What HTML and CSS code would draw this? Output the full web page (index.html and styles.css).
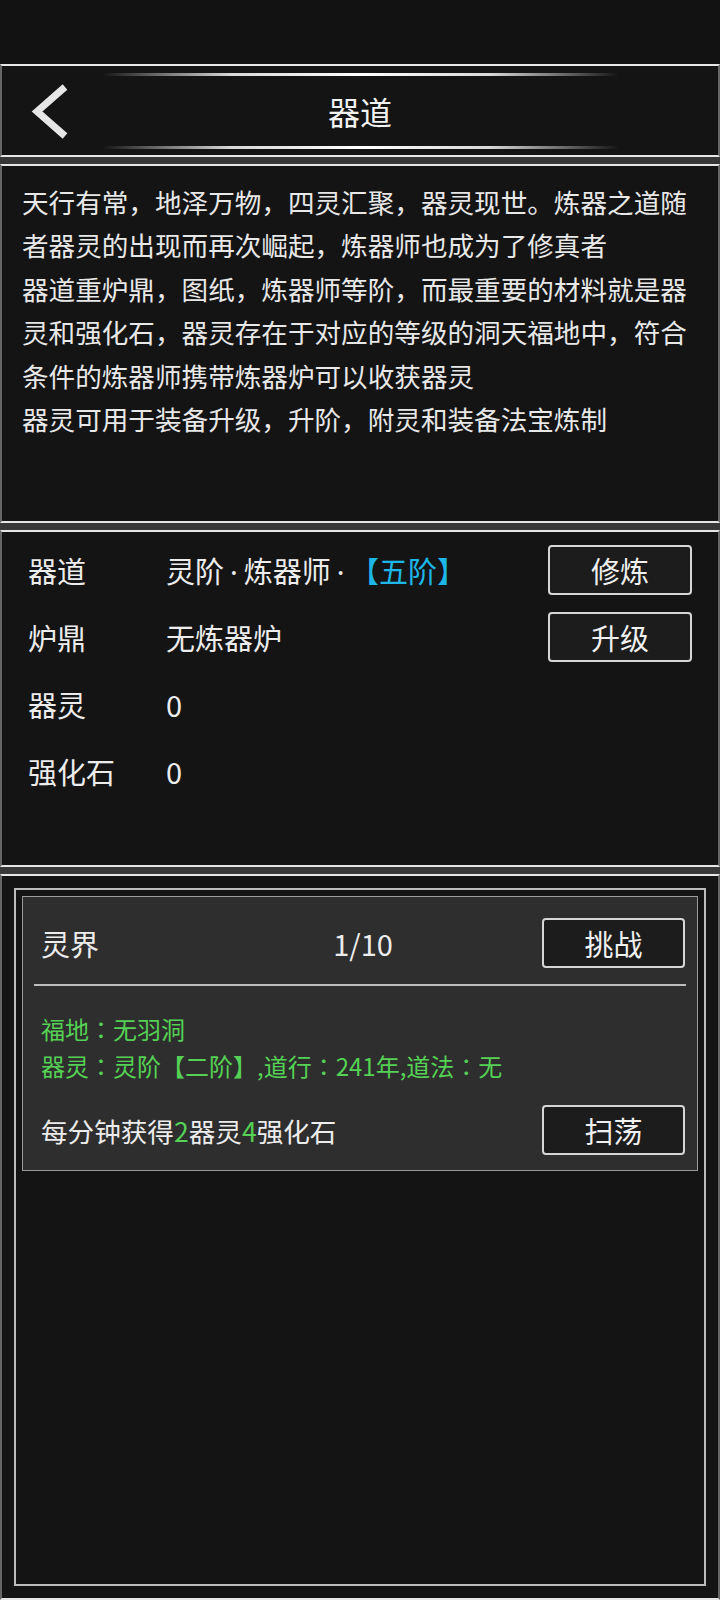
FILE: index.html
```html
<!DOCTYPE html>
<html lang="zh-CN">
<head>
  <meta charset="UTF-8" />
  <meta name="viewport" content="width=device-width, initial-scale=1.0" />
  <title>器道</title>
  <link rel="stylesheet" href="styles.css">
</head>
<body>

  <div class="status-bar"></div>

  <!-- Title bar -->
  <div class="panel topbar">
    <div class="topbar-line"></div>
    <div class="topbar-row">
      <svg class="back" width="40" height="56" viewBox="0 0 40 56" aria-label="返回">
        <polyline points="35,4 7,28.5 35,53" fill="none" stroke="#e6e6e6" stroke-width="7" stroke-linejoin="miter"/>
      </svg>
      <h1 class="topbar-title">器道</h1>
      <div></div>
    </div>
    <div class="topbar-line"></div>
  </div>

  <!-- Intro -->
  <div class="panel intro">
    <p>天行有常，地泽万物，四灵汇聚，器灵现世。炼器之道随者器灵的出现而再次崛起，炼器师也成为了修真者</p>
    <p>器道重炉鼎，图纸，炼器师等阶，而最重要的材料就是器灵和强化石，器灵存在于对应的等级的洞天福地中，符合条件的炼器师携带炼器炉可以收获器灵</p>
    <p>器灵可用于装备升级，升阶，附灵和装备法宝炼制</p>
  </div>

  <!-- Stats -->
  <div class="panel stats">
    <div class="stat-row">
      <span>器道</span>
      <span>灵阶<span class="sep">·</span>炼器师<span class="sep">·</span><span class="tier">【五阶】</span></span>
      <button class="btn">修炼</button>
    </div>
    <div class="stat-row">
      <span>炉鼎</span>
      <span>无炼器炉</span>
      <button class="btn">升级</button>
    </div>
    <div class="stat-row">
      <span>器灵</span>
      <span>0</span>
      <span></span>
    </div>
    <div class="stat-row">
      <span>强化石</span>
      <span>0</span>
      <span></span>
    </div>
  </div>

  <!-- Realm list -->
  <div class="panel realm">
    <div class="realm-frame">
      <div class="realm-card">
        <div class="card-head">
          <span>灵界</span>
          <span>1/10</span>
          <button class="btn">挑战</button>
        </div>
        <div class="card-divider"></div>
        <div class="card-info">
          <div>福地<span class="colon" lang="zh-TW">：</span>无羽洞</div>
          <div>器灵<span class="colon" lang="zh-TW">：</span>灵阶【二阶】,道行<span class="colon" lang="zh-TW">：</span>241年,道法<span class="colon" lang="zh-TW">：</span>无</div>
        </div>
        <div class="card-foot">
          <span>每分钟获得<span class="hl">2</span>器灵<span class="hl">4</span>强化石</span>
          <button class="btn">扫荡</button>
        </div>
      </div>
    </div>
  </div>

</body>
</html>
```

FILE: styles.css
```css
* {
  box-sizing: border-box;
}
html, body {
  margin: 0;
}
body {
  height: 1600px;
  display: flex;
  flex-direction: column;
  background: #383838; /* shows between the panels */
  font-family: "Noto Sans CJK SC", sans-serif;
  color: #ececec;
}
.status-bar {
  flex: none;
  height: 64px;
  background: #121212;
}
/* Shared panel look: white top/bottom rules, grey sides */
.panel {
  flex: none;
  background: #141414;
  border-top: 2px solid #e6e6e6;
  border-bottom: 2px solid #e6e6e6;
  border-left: 2px solid #666;
  border-right: 2px solid #666;
}
.panel + .panel {
  margin-top: 7px;
}

/* Title bar */
.topbar {
  height: 93px;
  display: flex;
  flex-direction: column;
  padding: 7px 0 6px;
}
.topbar-line {
  width: 517px;
  height: 3px;
  margin: 0 auto;
  border-radius: 2px;
  background: linear-gradient(to right,
    rgba(255, 255, 255, 0) 0%,
    #555 8%,
    #d8d8d8 25%,
    #fff 50%,
    #d8d8d8 75%,
    #555 92%,
    rgba(255, 255, 255, 0) 100%);
}
.topbar-row {
  flex: 1;
  display: grid;
  grid-template-columns: 1fr auto 1fr;
  align-items: center;
}
.back {
  display: block;
  margin-left: 28px;
}
.topbar-title {
  margin: 0;
  font-size: 32px;
  font-weight: normal;
  line-height: 1;
  color: #f2f2f2;
}

/* Intro text */
.intro {
  height: 359px;
  padding: 14px 20px;
  font-size: 26.6px;
  line-height: 43.4px;
  color: #e8e8e8;
}
.intro p {
  margin: 0;
}

/* Stats rows */
.stats {
  height: 337px;
  padding: 4px 26px 0;
}
.stat-row {
  display: grid;
  grid-template-columns: 138px 1fr 144px;
  align-items: center;
  height: 67px;
  font-size: 29px;
}
/* narrow latin middle dot with a little air */
.sep {
  font-family: "Noto Sans", sans-serif;
  margin: 0 6px;
}
.tier {
  margin-left: 14px;
  color: #1cb7e8;
}
.btn {
  width: 144px;
  height: 50px;
  padding: 0;
  display: flex;
  align-items: center;
  justify-content: center;
  background: #1c1c1c;
  border: 2px solid #d6d6d6;
  border-radius: 4px;
  font-family: inherit;
  font-size: 29px;
  color: #f0f0f0;
}

/* Realm list */
.realm {
  flex: 1;
  display: flex;
  padding: 12px;
}
.realm-frame {
  flex: 1;
  border: 2px solid #bcbcbc;
  padding: 6px;
}
.realm-card {
  background: #2e2e2e;
  border: 1px solid #9a9a9a;
  padding: 21px 11px 15px;
}
.card-head {
  display: grid;
  grid-template-columns: 1fr auto 1fr;
  align-items: center;
  height: 50px;
  padding: 0 1px 0 7px;
  font-size: 29px;
}
.card-head .btn {
  justify-self: end;
  width: 143px;
}
.card-divider {
  height: 2px;
  margin-top: 16px;
  background: #bdbdbd;
}
.card-info {
  margin-top: 24px;
  padding-left: 7px;
  font-size: 24px;
  line-height: 37px;
  color: #55d155;
}
/* centred full-width colon */
.colon {
  font-family: "Noto Sans CJK TC", sans-serif;
}
.card-foot {
  margin-top: 21px;
  display: flex;
  justify-content: space-between;
  align-items: center;
  padding: 0 1px 0 7px;
  font-size: 26.6px;
}
.card-foot .btn {
  width: 143px;
}
.hl {
  color: #55d155;
}
```
